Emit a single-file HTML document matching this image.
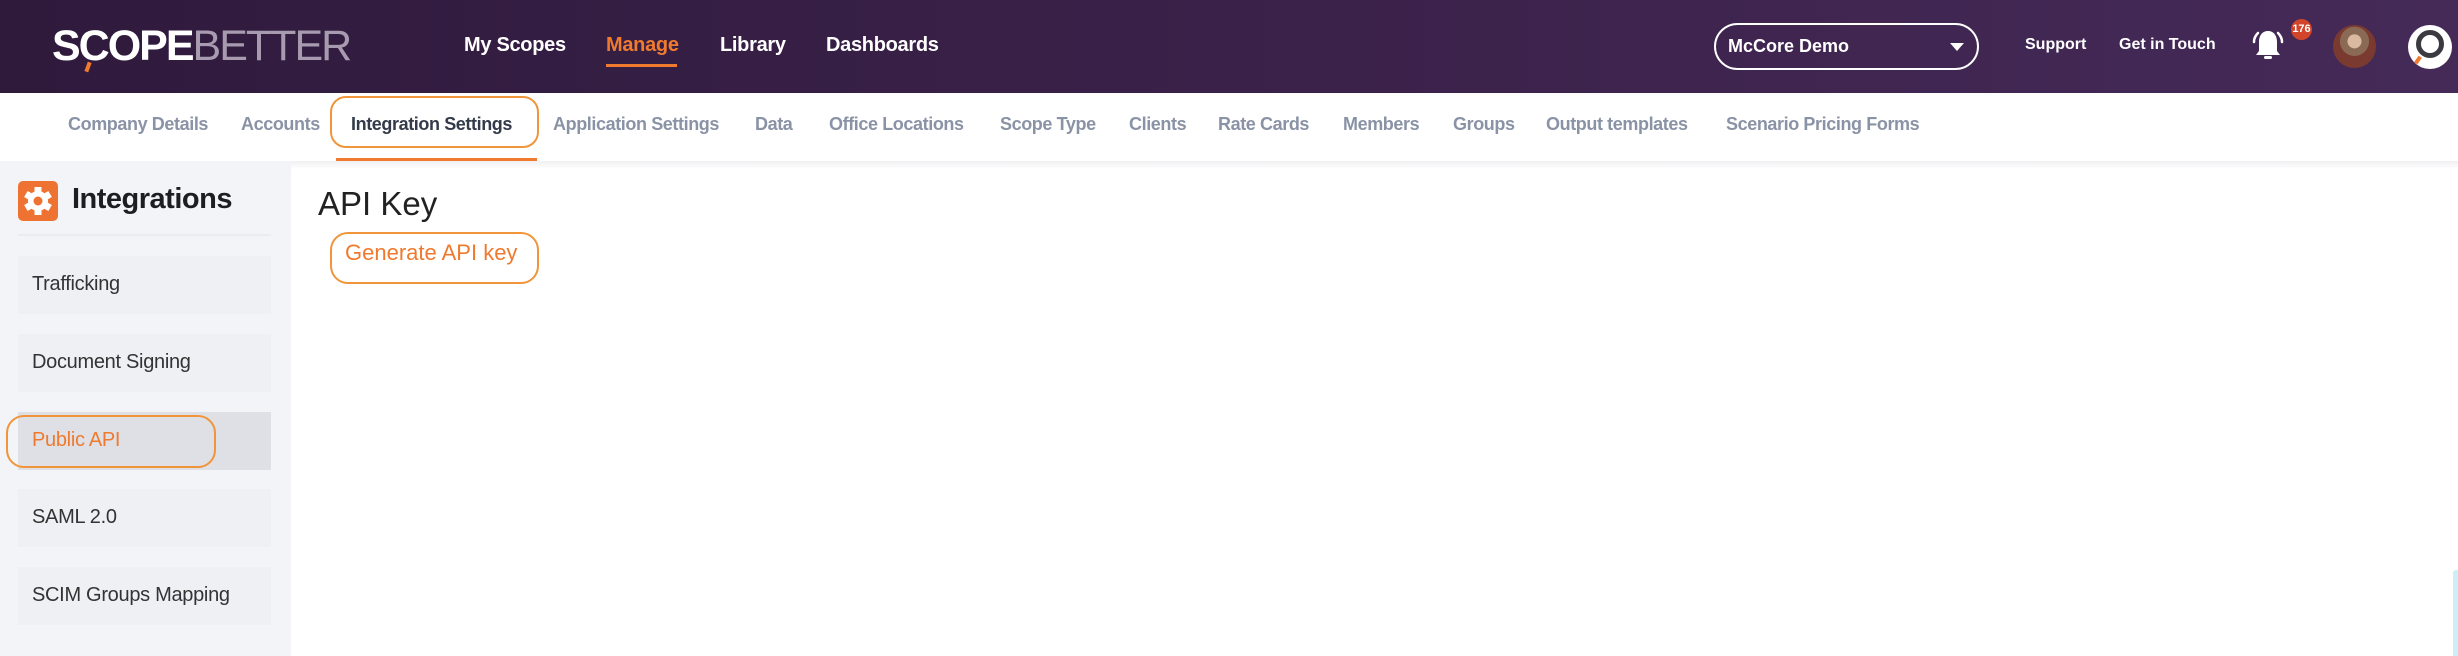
<!DOCTYPE html>
<html><head><meta charset="utf-8"><style>
*{margin:0;padding:0;box-sizing:border-box}
body{width:2458px;height:656px;overflow:hidden;background:#fff;font-family:"Liberation Sans",sans-serif;position:relative}
.a{position:absolute;white-space:nowrap}
#hdr{position:absolute;left:0;top:0;width:2458px;height:93px;background:linear-gradient(90deg,#2f1a3c,#3a2149 50%,#452a58)}
.nav{color:#fff;font-size:20px;font-weight:bold;top:34px;letter-spacing:-0.3px}
.sub{color:#8a93a6;font-size:18px;font-weight:bold;top:114px;letter-spacing:-0.4px}
.item{position:absolute;left:18px;width:253px;height:58px;background:#eef0f4;color:#333;font-size:20px;padding-left:14px;line-height:56px;letter-spacing:-0.3px}
</style></head><body>
<div id="hdr"></div>
<div class="a" style="left:52px;top:22px;font-size:43px;font-weight:bold;letter-spacing:-2px;color:#fff">SCOPE<span style="color:#a89bb0;font-weight:normal">BETTER</span></div>
<div class="a" style="left:86px;top:62px;width:4px;height:10px;background:#f07a2e;transform:rotate(20deg)"></div>
<div class="a nav" style="left:464px">My Scopes</div>
<div class="a nav" style="left:606px;color:#f07a2e">Manage</div>
<div class="a" style="left:606px;top:64px;width:71px;height:3px;background:#f07a2e"></div>
<div class="a nav" style="left:720px">Library</div>
<div class="a nav" style="left:826px">Dashboards</div>
<div class="a" style="left:1714px;top:23px;width:265px;height:47px;border:2px solid #fff;border-radius:24px"></div>
<div class="a" style="left:1728px;top:36px;color:#fff;font-size:18px;font-weight:bold">McCore Demo</div>
<div class="a" style="left:1950px;top:43px;width:0;height:0;border-left:7px solid transparent;border-right:7px solid transparent;border-top:8px solid #fff"></div>
<div class="a" style="left:2025px;top:36px;color:#fff;font-size:16px;font-weight:bold">Support</div>
<div class="a" style="left:2119px;top:36px;color:#fff;font-size:16px;font-weight:bold">Get in Touch</div>
<svg class="a" style="left:2248px;top:26px" width="40" height="40" viewBox="0 0 40 40"><path d="M20 5c-6 0-9 5-9 11v9l-3 4h24l-3-4v-9c0-6-3-11-9-11z" fill="#fff"/><rect x="16" y="30" width="8" height="3" rx="1.5" fill="#fff"/><path d="M6 16c0-4 2-7 4-9M34 16c0-4-2-7-4-9" stroke="#fff" stroke-width="2.5" fill="none" stroke-linecap="round"/></svg>
<div class="a" style="left:2291px;top:19px;width:21px;height:21px;border-radius:50%;background:#d2452a;color:#fff;font-size:11px;font-weight:bold;text-align:center;line-height:21px">176</div>
<div class="a" style="left:2333px;top:25px;width:43px;height:43px;border-radius:50%;background:radial-gradient(circle at 50% 38%,#d9b9a0 0 20%,#8a6a55 21% 42%,#7a3a30 43%)"></div>
<div class="a" style="left:2408px;top:25px;width:44px;height:44px;border-radius:50%;background:#fff"></div>
<div class="a" style="left:2416px;top:30px;width:28px;height:28px;border-radius:50%;border:5px solid #3a3a40"></div>
<div class="a" style="left:2416px;top:56px;width:4px;height:8px;background:#f07a2e;transform:rotate(35deg)"></div>

<div class="a sub" style="left:68px">Company Details</div>
<div class="a sub" style="left:241px">Accounts</div>
<div class="a" style="left:330px;top:96px;width:209px;height:52px;border:2px solid #f0953a;border-radius:16px"></div>
<div class="a sub" style="left:351px;color:#333a4a">Integration Settings</div>
<div class="a" style="left:336px;top:158px;width:201px;height:3px;background:#f07a2e"></div>
<div class="a sub" style="left:553px">Application Settings</div>
<div class="a sub" style="left:755px">Data</div>
<div class="a sub" style="left:829px">Office Locations</div>
<div class="a sub" style="left:1000px">Scope Type</div>
<div class="a sub" style="left:1129px">Clients</div>
<div class="a sub" style="left:1218px">Rate Cards</div>
<div class="a sub" style="left:1343px">Members</div>
<div class="a sub" style="left:1453px">Groups</div>
<div class="a sub" style="left:1546px">Output templates</div>
<div class="a sub" style="left:1726px">Scenario Pricing Forms</div>
<div class="a" style="left:0;top:161px;width:2458px;height:8px;background:linear-gradient(#f0f0f2,#fff)"></div>

<div class="a" style="left:0;top:161px;width:291px;height:495px;background:#f3f4f7"></div>
<div class="a" style="left:18px;top:181px;width:40px;height:40px;border-radius:5px;background:#ee7332"></div>
<svg class="a" style="left:18px;top:181px" width="40" height="40" viewBox="0 0 40 40"><g fill="#fff" transform="translate(20 20)"><circle r="10"/><rect x="-3.5" y="-14" width="7" height="28"/><rect x="-3.5" y="-14" width="7" height="28" transform="rotate(60)"/><rect x="-3.5" y="-14" width="7" height="28" transform="rotate(120)"/></g><circle cx="20" cy="20" r="4.5" fill="#ee7332"/></svg>
<div class="a" style="left:72px;top:183px;font-size:29px;font-weight:bold;color:#1e1e22;letter-spacing:-0.5px">Integrations</div>
<div class="a" style="left:18px;top:234px;width:253px;height:2px;background:#eaecf1"></div>
<div class="item" style="top:256px">Trafficking</div>
<div class="item" style="top:334px">Document Signing</div>
<div class="item" style="top:412px;background:#dfe0e5;color:#ef7a2e">Public API</div>
<div class="a" style="left:6px;top:415px;width:210px;height:53px;border:2px solid #f0953a;border-radius:18px"></div>
<div class="item" style="top:489px">SAML 2.0</div>
<div class="item" style="top:567px">SCIM Groups Mapping</div>

<div class="a" style="left:318px;top:185px;font-size:33px;color:#222">API Key</div>
<div class="a" style="left:330px;top:232px;width:209px;height:52px;border:2px solid #f0953a;border-radius:18px"></div>
<div class="a" style="left:345px;top:240px;font-size:22px;color:#ef7a2e">Generate API key</div>
<div class="a" style="left:2453px;top:570px;width:5px;height:86px;background:#cdeef5;border-radius:3px 0 0 0"></div>
</body></html>
